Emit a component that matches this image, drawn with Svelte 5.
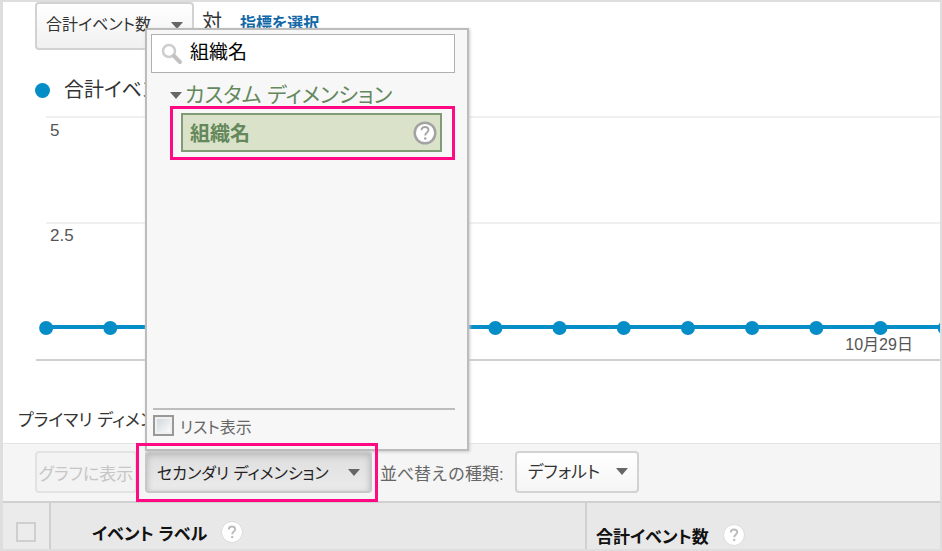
<script lang="ts">
	const metrics = ['合計イベント数', 'ユニーク イベント数', 'イベントの値'];
	const sortTypes = ['デフォルト', '絶対変化量', '加重'];
	const dimensions = ['組織名'];

	/* Daily totals, one entry per day. */
	const series = Array.from({ length: 15 }, () => 0);
	const firstX = 4.6;
	const stepX = 6.85;

	let metric = $state(metrics[0]);
	let sortType = $state(sortTypes[0]);
	let query = $state('組織名');
	let menuOpen = $state(true);
	let groupOpen = $state(true);
	let listView = $state(false);
	let allSelected = $state(false);

	const matches = $derived(dimensions.filter((d) => d.includes(query)));
</script>

{#snippet caret()}
	<svg class="caret" width="12" height="7" viewBox="0 0 12 7" aria-hidden="true">
		<path d="M0 0h12L6 7z" fill="currentColor" />
	</svg>
{/snippet}

{#snippet help()}
	<svg width="22" height="22" viewBox="0 0 22 22" aria-hidden="true">
		<circle cx="11" cy="11" r="10.5" fill="#fff" stroke="#dcdcdc" />
		<path
			d="M7.800 8.500C7.800 6.500 9.200 5.500 11 5.500S14.200 6.500 14.200 8.300C14.200 10.500 11.200 10.600 11.200 13.200"
			fill="none"
			stroke="#bdbdbd"
			stroke-width="2"
		/>
		<circle cx="11.2" cy="16" r="1.2" fill="#bdbdbd" />
	</svg>
{/snippet}

<main class="report">
	<div class="metric-row">
		<div class="dropdown metric-select">
			<select aria-label="指標" bind:value={metric}>
				{#each metrics as m}
					<option>{m}</option>
				{/each}
			</select>
			{@render caret()}
		</div>
		<span class="versus">対</span>
		<a class="pick-metric" href="#metric">指標を選択</a>
	</div>

	<div class="legend">
		<span class="legend-dot"></span>
		<span>合計イベント数</span>
	</div>

	<svg class="chart" role="img" aria-label="合計イベント数の推移">
		<line class="grid" x1="43" x2="100%" y1="10" y2="10" />
		<line class="grid" x1="43" x2="100%" y1="116" y2="116" />
		<text x="47" y="29">5</text>
		<text x="47" y="134">2.5</text>
		<line class="axis" x1="33" x2="100%" y1="253" y2="253" />
		<line class="series" x1="{firstX}%" x2="100%" y1="220" y2="220" />
		{#each series as value, i}
			<circle cx="{firstX + i * stepX}%" cy={221 - value * 42} r="7" />
		{/each}
		<text class="date" x="93.5%" y="243" text-anchor="middle">10月29日</text>
	</svg>

	<div class="primary">プライマリ ディメンション:</div>

	<div class="toolbar">
		<button class="plot" type="button" disabled>グラフに表示</button>
		<div class="secondary">
			<button
				class="secondary-button"
				type="button"
				aria-expanded={menuOpen}
				onclick={() => (menuOpen = !menuOpen)}
			>
				<span>セカンダリ ディメンション</span>
				{@render caret()}
			</button>

			{#if menuOpen}
				<div class="menu">
					<div class="search">
						<svg width="22" height="22" viewBox="0 0 22 22" aria-hidden="true">
							<circle cx="8" cy="8" r="6" fill="none" stroke="#cdcdcd" stroke-width="2.5" />
							<path d="M13 13l6 6" stroke="#c2c2c2" stroke-width="4" stroke-linecap="round" />
						</svg>
						<input type="text" aria-label="ディメンションを検索" bind:value={query} />
					</div>

					<div class="tree">
						<button
							class="group"
							type="button"
							aria-expanded={groupOpen}
							onclick={() => (groupOpen = !groupOpen)}
						>
							{@render caret()}
							<span>カスタム ディメンション</span>
						</button>
						{#if groupOpen}
							{#each matches as name}
								<div class="item-highlight">
									<button class="item" type="button">
										<span>{name}</span>
										<svg width="24" height="24" viewBox="0 0 24 24" aria-hidden="true">
											<circle cx="12" cy="12" r="10.3" fill="#fff" stroke="#a3a3a3" stroke-width="2.5" />
											<path
												d="M8.500 9.300C8.500 7 10 6 12 6S15.500 7 15.500 9C15.500 11.500 12.200 11.600 12.200 14.500"
												fill="none"
												stroke="#a3a3a3"
												stroke-width="1.8"
											/>
											<circle cx="12.2" cy="17.5" r="1.2" fill="#a3a3a3" />
										</svg>
									</button>
								</div>
							{/each}
						{/if}
					</div>

					<label class="list-view">
						<input type="checkbox" bind:checked={listView} />
						<span>リスト表示</span>
					</label>
				</div>
			{/if}
			<span class="highlight"></span>
		</div>

		<label class="sort-label" for="sort-type">並べ替えの種類:</label>
		<div class="dropdown sort-select">
			<select id="sort-type" bind:value={sortType}>
				{#each sortTypes as s}
					<option>{s}</option>
				{/each}
			</select>
			{@render caret()}
		</div>
	</div>

	<table>
		<thead>
			<tr>
				<th class="check">
					<input type="checkbox" aria-label="すべて選択" bind:checked={allSelected} />
				</th>
				<th class="label" scope="col">
					<div class="heading">イベント ラベル {@render help()}</div>
				</th>
				<th class="total" scope="col">
					<div class="heading">合計イベント数 {@render help()}</div>
				</th>
			</tr>
		</thead>
	</table>
</main>

<style>
	:global(body) {
		margin: 0;
		background: #fff;
	}
	.report {
		--pink: #ff0a82;
		--green: #64885b;
		--blue: #058dc7;
		box-sizing: border-box;
		border: 2px solid #dedede;
		border-left-width: 3px;
		color: #333;
		font-family: 'Liberation Sans', 'Noto Sans CJK JP', sans-serif;
		font-size: 17px;
		font-feature-settings: 'palt';
		overflow: hidden;
	}
	button,
	select,
	input {
		box-sizing: border-box;
		margin: 0;
		color: inherit;
		font: inherit;
		font-feature-settings: inherit;
	}
	.caret {
		flex: none;
		color: #666;
	}

	.dropdown {
		position: relative;
	}
	.dropdown select {
		width: 100%;
		height: 42px;
		padding: 0 32px 0 11px;
		appearance: none;
		background: linear-gradient(#fff, #f5f5f5);
		border: 2px solid #d2d2d2;
		border-radius: 4px;
	}
	.dropdown .caret {
		position: absolute;
		top: 50%;
		right: 11px;
		margin-top: -4px;
		pointer-events: none;
	}

	.metric-row {
		display: flex;
		align-items: flex-start;
		padding-left: 32px;
	}
	.metric-select {
		width: 159px;
	}
	.metric-select select {
		height: 48px;
		padding: 0 32px 4px 9px;
		background: linear-gradient(#fff, #f0f0f0);
		font-size: 16px;
	}
	.versus {
		margin-left: 8px;
		font-size: 20px;
		line-height: 40px;
	}
	.pick-metric {
		margin-left: 18px;
		color: #1168a8;
		font-size: 16px;
		font-weight: 700;
		line-height: 44px;
		text-decoration: none;
	}

	.legend {
		display: flex;
		align-items: center;
		gap: 14px;
		padding: 25px 0 2px 32px;
		font-size: 20px;
		line-height: 30px;
	}
	.legend-dot {
		width: 15px;
		height: 15px;
		background: var(--blue);
		border-radius: 50%;
	}

	.chart {
		display: block;
		width: 100%;
		height: 256px;
	}
	.chart text {
		fill: #555;
		font-size: 17px;
	}
	.chart .date {
		font-size: 16px;
	}
	.chart .grid {
		stroke: #f0f0f0;
		stroke-width: 2;
	}
	.chart .axis {
		stroke: #d0d0d0;
		stroke-width: 2;
	}
	.chart .series {
		stroke: var(--blue);
		stroke-width: 4;
	}
	.chart circle {
		fill: var(--blue);
	}

	.primary {
		padding: 45px 0 9px 15px;
		line-height: 26px;
	}

	.toolbar {
		display: flex;
		align-items: center;
		padding: 7px 32px 8px;
		background: #f5f5f5;
		border-top: 1px solid #e4e4e4;
	}
	.plot {
		width: 102px;
		height: 42px;
		padding: 0;
		background: #f3f3f3;
		border: 2px solid #e2e2e2;
		border-radius: 4px;
		color: #c6c6c6;
		white-space: nowrap;
	}
	.secondary {
		position: relative;
		margin-left: 8px;
	}
	.secondary-button {
		display: flex;
		align-items: center;
		justify-content: space-between;
		width: 227px;
		height: 42px;
		padding: 0 10px;
		background: linear-gradient(#dedede, #ebebeb);
		border: 2px solid #c8c8c8;
		border-radius: 4px;
		box-shadow: inset 0 2px 6px #b4b4b4;
		color: #222;
		font-size: 16px;
		white-space: nowrap;
	}
	/* Frames the button and stays above the open menu. */
	.highlight {
		position: absolute;
		inset: -8px -6px -9px -9px;
		z-index: 3;
		border: 3px solid var(--pink);
		pointer-events: none;
	}
	.sort-label {
		margin-left: 8px;
		color: #666;
		font-feature-settings: normal;
		white-space: nowrap;
	}
	.sort-select {
		width: 124px;
		margin-left: 11px;
	}

	.menu {
		position: absolute;
		bottom: 100%;
		left: 0;
		z-index: 2;
		box-sizing: border-box;
		width: 324px;
		padding: 4px 12px 0 4px;
		background: #f7f7f7;
		border: 2px solid #bcbcbc;
		box-shadow: 1px 1px 3px #ccc;
	}
	.search {
		display: flex;
		align-items: center;
		gap: 7px;
		height: 37px;
		padding-left: 9px;
		background: #fff;
		border: 1px solid #b0b0b0;
	}
	.search svg {
		flex: none;
	}
	.search input {
		flex: 1;
		min-width: 0;
		height: 36px;
		padding: 0 0 6px;
		background: none;
		border: 0;
		outline: 0;
		color: #000;
		font-size: 19px;
	}
	.tree {
		box-sizing: border-box;
		min-height: 335px;
		padding: 11px 0 0 19px;
	}
	.group {
		display: flex;
		align-items: center;
		gap: 3px;
		padding: 0;
		background: none;
		border: 0;
		color: var(--green);
		font-size: 21px;
		line-height: 22px;
		white-space: nowrap;
	}
	.item-highlight {
		padding: 4px 10px 5px 8px;
		border: 3px solid var(--pink);
	}
	.item {
		display: flex;
		align-items: center;
		justify-content: space-between;
		width: 100%;
		height: 39px;
		padding: 0 3px 0 7px;
		background: #dae3ca;
		border: 2px solid #7f9c76;
		color: var(--green);
		font-size: 20px;
		font-weight: 700;
	}
	.list-view {
		display: flex;
		align-items: flex-start;
		gap: 6px;
		box-sizing: border-box;
		height: 41px;
		margin-left: 2px;
		border-top: 2px solid #bdbdbd;
		color: #666;
		font-size: 16px;
		line-height: 36px;
	}
	.list-view input {
		width: 21px;
		height: 21px;
		margin-top: 5px;
		appearance: none;
		background: linear-gradient(135deg, #ccd3d9, #fff);
		border: 2px solid #999;
		box-shadow: inset 0 0 0 2px #f0f0f0;
	}
	.list-view input:checked {
		background: #7f9c76;
	}

	table {
		width: 100%;
		background: #e8e8e8;
		border-collapse: separate;
		border-spacing: 0;
		border-top: 2px solid #d0d0d0;
		table-layout: fixed;
	}
	th {
		height: 46px;
		padding: 0;
		color: #111;
		text-align: left;
	}
	th + th {
		border-left: 2px solid #d0d0d0;
	}
	.check {
		width: 46px;
		background: #ebebeb;
	}
	.check input {
		display: block;
		width: 20px;
		height: 20px;
		margin: 11px auto 0;
		appearance: none;
		background: #ececec;
		border: 2px solid #cfcfcf;
	}
	.check input:checked {
		background: #999;
	}
	.label {
		width: 57%;
	}
	.heading {
		display: flex;
		align-items: center;
		gap: 14px;
		padding: 18px 0 0 9px;
		white-space: nowrap;
	}
	.label .heading {
		padding: 12px 0 0 41px;
	}
</style>
